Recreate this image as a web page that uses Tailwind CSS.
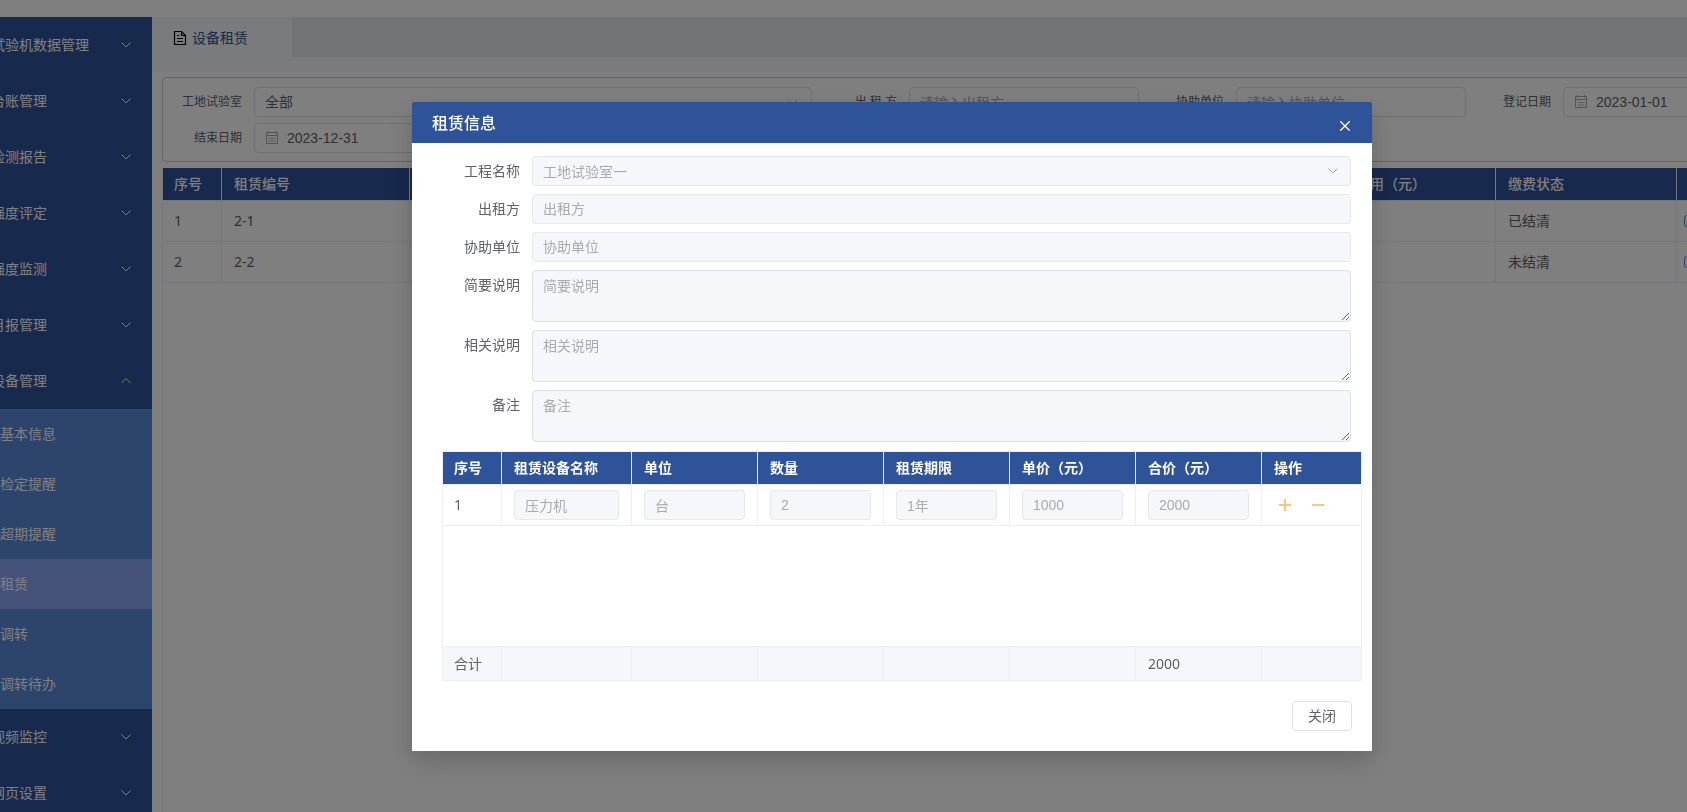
<!DOCTYPE html>
<html lang="zh-CN">
<head>
<meta charset="utf-8">
<title>设备租赁</title>
<script src="https://cdn.jsdelivr.net/npm/@tailwindcss/browser@4"></script>
</head>
<body class="h-screen overflow-hidden bg-white font-['Noto_Sans','Noto_Sans_CJK_SC',sans-serif] text-sm text-[#606266]">
<svg class="hidden">
  <symbol id="down" viewBox="0 0 14 14"><path d="M2.5 4.5 7 9l4.500-4.500" fill="none" stroke="currentColor"/></symbol>
  <symbol id="up" viewBox="0 0 14 14"><path d="M2.500 9 7 4.500 11.500 9" fill="none" stroke="currentColor"/></symbol>
  <symbol id="cal" viewBox="0 0 14 14"><path d="M1.500 1.500h11v11h-11zM1.500 4.500h11M3.500 0v2.500M10.500 0v2.500" fill="none" stroke="currentColor"/><path d="M3.500 7.500h2M6 7.500h2M8.500 7.500h2M3.500 10h2M6 10h2M8.500 10h2" fill="none" stroke="currentColor"/></symbol>
</svg>

<div class="flex h-full flex-col pt-[17px]">
  <div class="flex min-h-0 flex-1">
    <nav class="w-[152px] shrink-0 overflow-hidden bg-[#2e5398] text-white">
      <ul>
        <li><a href="#" class="-ml-[9px] flex h-14 items-center justify-between whitespace-nowrap pr-[19px]">试验机数据管理<svg class="size-3.5"><use href="#down"/></svg></a></li>
        <li><a href="#" class="-ml-[9px] flex h-14 items-center justify-between whitespace-nowrap pr-[19px]">台账管理<svg class="size-3.5"><use href="#down"/></svg></a></li>
        <li><a href="#" class="-ml-[9px] flex h-14 items-center justify-between whitespace-nowrap pr-[19px]">检测报告<svg class="size-3.5"><use href="#down"/></svg></a></li>
        <li><a href="#" class="-ml-[9px] flex h-14 items-center justify-between whitespace-nowrap pr-[19px]">强度评定<svg class="size-3.5"><use href="#down"/></svg></a></li>
        <li><a href="#" class="-ml-[9px] flex h-14 items-center justify-between whitespace-nowrap pr-[19px]">强度监测<svg class="size-3.5"><use href="#down"/></svg></a></li>
        <li><a href="#" class="-ml-[9px] flex h-14 items-center justify-between whitespace-nowrap pr-[19px]">月报管理<svg class="size-3.5"><use href="#down"/></svg></a></li>
        <li>
          <a href="#" class="-ml-[9px] flex h-14 items-center justify-between whitespace-nowrap pr-[19px]">设备管理<svg class="size-3.5"><use href="#up"/></svg></a>
          <ul class="bg-[#5a88d8]">
            <li><a href="#" class="flex h-[50px] items-center">基本信息</a></li>
            <li><a href="#" class="flex h-[50px] items-center">检定提醒</a></li>
            <li><a href="#" class="flex h-[50px] items-center">超期提醒</a></li>
            <li><a href="#" class="flex h-[50px] items-center bg-[#8ba6f6]">租赁</a></li>
            <li><a href="#" class="flex h-[50px] items-center">调转</a></li>
            <li><a href="#" class="flex h-[50px] items-center">调转待办</a></li>
          </ul>
        </li>
        <li><a href="#" class="-ml-[9px] flex h-14 items-center justify-between whitespace-nowrap pr-[19px]">视频监控<svg class="size-3.5"><use href="#down"/></svg></a></li>
        <li><a href="#" class="-ml-[9px] flex h-14 items-center justify-between whitespace-nowrap pr-[19px]">网页设置<svg class="size-3.5"><use href="#down"/></svg></a></li>
      </ul>
    </nav>

    <main class="flex min-w-0 flex-1 flex-col overflow-hidden">
      <div class="bg-[#f5f7fa] pb-[15px]">
        <div class="flex h-10 bg-[#e4e7eb]">
          <a href="#" class="flex w-[140px] items-center gap-[5px] bg-[#f5f7fa] pl-[21px] pt-0.5 text-[#2e5398]">
            <svg class="h-4 w-3.5 text-black" viewBox="0 0 14 16" fill="none" stroke="currentColor" stroke-width="1.200"><path d="M1.500 1.500h7l4 4v9h-11z"/><path d="M8.500 1.500v4h4M4 5.500h2M4 8.500h6M4 11.500h6"/></svg>
            设备租赁
          </a>
        </div>
      </div>

      <form class="-mr-1 ml-2.5 mt-[5px] flex flex-col gap-1.5 rounded border border-[#ccc] pb-2 pt-[9px] text-xs text-[#606266]">
        <div class="flex items-center whitespace-nowrap">
          <label for="lab" class="w-[79px] text-right">工地试验室</label>
          <div class="relative ml-3 min-w-0 flex-1">
            <select id="lab" class="block h-[30px] w-full appearance-none rounded border border-[#dcdfe6] px-2.5 text-sm"><option>全部</option></select>
            <svg class="pointer-events-none absolute right-3 top-2 size-3.5 text-[#c0c4cc]"><use href="#down"/></svg>
          </div>
          <label for="lessor" class="ml-[41px] w-[44px] text-right">出 租 方</label>
          <input id="lessor" placeholder="请输入出租方" class="ml-3 h-[30px] w-[230px] rounded border border-[#dcdfe6] px-2.5 text-sm placeholder:text-[#a8abb2]">
          <label for="assist" class="ml-[37px]">协助单位</label>
          <input id="assist" placeholder="请输入协助单位" class="ml-3 h-[30px] w-[230px] rounded border border-[#dcdfe6] px-2.5 text-sm placeholder:text-[#a8abb2]">
          <label for="start" class="ml-[37px]">登记日期</label>
          <div class="-mr-[71px] ml-3 flex h-[30px] w-[198px] items-center gap-2 rounded border border-[#dcdfe6] pl-2.5">
            <svg class="size-3.5 text-[#a8abb2]"><use href="#cal"/></svg>
            <input id="start" value="2023-01-01" class="w-24 font-['Liberation_Sans',sans-serif] text-sm">
          </div>
        </div>
        <div class="flex items-center">
          <label for="end" class="w-[79px] text-right">结束日期</label>
          <div class="ml-3 flex h-[30px] w-[198px] items-center gap-2 rounded border border-[#dcdfe6] pl-2.5">
            <svg class="size-3.5 text-[#a8abb2]"><use href="#cal"/></svg>
            <input id="end" value="2023-12-31" class="w-24 font-['Liberation_Sans',sans-serif] text-sm">
          </div>
        </div>
      </form>

      <div class="ml-2.5 mt-1.5 flex-1 border-l border-[#ebeef5]">
        <table class="w-[calc(100%+170px)] table-fixed border-separate border-spacing-0 text-left">
          <colgroup><col class="w-[59px]"><col class="w-[188px]"><col><col class="w-[180px]"><col class="w-[181px]"><col class="w-[180px]"></colgroup>
          <thead class="bg-[#2e5398] text-white">
            <tr class="h-[33px]">
              <th class="border-b border-r border-[#ebeef5] pl-[11px] font-medium">序号</th>
              <th class="border-b border-r border-[#ebeef5] pl-3 font-medium">租赁编号</th>
              <th class="border-b border-r border-[#ebeef5]"></th>
              <th class="border-b border-r border-[#ebeef5] pl-3 font-medium">租赁费用（元）</th>
              <th class="border-b border-r border-[#ebeef5] pl-3 font-medium">缴费状态</th>
              <th class="border-b border-r border-[#ebeef5]"></th>
            </tr>
          </thead>
          <tbody>
            <tr class="h-[41px]">
              <td class="border-b border-r border-[#ebeef5] pl-[11px]">1</td>
              <td class="border-b border-r border-[#ebeef5] pl-3">2-1</td>
              <td class="border-b border-r border-[#ebeef5]"></td>
              <td class="border-b border-r border-[#ebeef5]"></td>
              <td class="border-b border-r border-[#ebeef5] pl-3">已结清</td>
              <td class="border-b border-r border-[#ebeef5] pl-[7px]"><button type="button" aria-label="查看" class="block h-3 w-3.5 rounded-[3px] border border-[#4a80e8]"></button></td>
            </tr>
            <tr class="h-[41px]">
              <td class="border-b border-r border-[#ebeef5] pl-[11px]">2</td>
              <td class="border-b border-r border-[#ebeef5] pl-3">2-2</td>
              <td class="border-b border-r border-[#ebeef5]"></td>
              <td class="border-b border-r border-[#ebeef5]"></td>
              <td class="border-b border-r border-[#ebeef5] pl-3">未结清</td>
              <td class="border-b border-r border-[#ebeef5] pl-[7px]"><button type="button" aria-label="查看" class="block h-3 w-3.5 rounded-[3px] border border-[#4a80e8]"></button></td>
            </tr>
          </tbody>
        </table>
      </div>
    </main>
  </div>
</div>

<div class="fixed inset-0 flex items-start justify-center bg-black/50 pl-[97px] pt-[102px]">
  <section role="dialog" aria-labelledby="title" class="w-[960px] overflow-hidden rounded-[1px] bg-white pb-5 shadow-[0_12px_32px_4px_rgba(0,0,0,0.08),0_8px_20px_rgba(0,0,0,0.12)]">
    <header class="flex h-[41px] items-center justify-between bg-[#2e5398] pl-5 pr-[22px] text-white">
      <h2 id="title" class="text-base font-medium">租赁信息</h2>
      <button type="button" aria-label="关闭对话框" class="mt-1.5"><svg class="size-[10px]" viewBox="0 0 10 10"><path d="M0 0 10 10M10 0 0 10" stroke="currentColor" stroke-width="1.300"/></svg></button>
    </header>

    <form class="flex flex-col gap-2 pl-[30px] pr-[21px] pt-[13px] leading-[30px]">
      <div class="flex">
        <label for="project" class="w-[78px] text-right">工程名称</label>
        <div class="relative ml-3 flex-1">
          <select id="project" disabled class="block h-[30px] w-full appearance-none rounded border border-[#e4e7ed] bg-[#f5f7fa] px-2.5 text-[#a8abb2] opacity-100"><option>工地试验室一</option></select>
          <svg class="pointer-events-none absolute right-[11px] top-2 size-3.5 text-[#a8abb2]"><use href="#down"/></svg>
        </div>
      </div>
      <div class="flex">
        <label for="f2" class="w-[78px] text-right">出租方</label>
        <input id="f2" disabled placeholder="出租方" class="ml-3 h-[30px] flex-1 rounded border border-[#e4e7ed] bg-[#f5f7fa] px-2.5 placeholder:text-[#a8abb2]">
      </div>
      <div class="flex">
        <label for="f3" class="w-[78px] text-right">协助单位</label>
        <input id="f3" disabled placeholder="协助单位" class="ml-3 h-[30px] flex-1 rounded border border-[#e4e7ed] bg-[#f5f7fa] px-2.5 placeholder:text-[#a8abb2]">
      </div>
      <div class="flex">
        <label for="f4" class="w-[78px] text-right">简要说明</label>
        <textarea id="f4" disabled placeholder="简要说明" class="ml-3 block h-[52px] flex-1 resize-y rounded border border-[#dcdfe6] bg-[#f5f7fa] px-2.5 py-1 leading-[21px] placeholder:text-[#a8abb2]"></textarea>
      </div>
      <div class="flex">
        <label for="f5" class="w-[78px] text-right">相关说明</label>
        <textarea id="f5" disabled placeholder="相关说明" class="ml-3 block h-[52px] flex-1 resize-y rounded border border-[#dcdfe6] bg-[#f5f7fa] px-2.5 py-1 leading-[21px] placeholder:text-[#a8abb2]"></textarea>
      </div>
      <div class="flex">
        <label for="f6" class="w-[78px] text-right">备注</label>
        <textarea id="f6" disabled placeholder="备注" class="ml-3 block h-[52px] flex-1 resize-y rounded border border-[#dcdfe6] bg-[#f5f7fa] px-2.5 py-1 leading-[21px] placeholder:text-[#a8abb2]"></textarea>
      </div>
    </form>

    <div class="ml-[30px] mr-2.5 mt-[9px] border-l border-t border-[#ebeef5]">
      <table class="w-full table-fixed border-separate border-spacing-0 text-left">
        <colgroup><col class="w-[59px]"><col class="w-[130px]"><col class="w-[126px]"><col class="w-[126px]"><col class="w-[126px]"><col class="w-[126px]"><col class="w-[126px]"><col></colgroup>
        <thead class="bg-[#2e5398] text-white">
          <tr class="h-[33px]">
            <th class="border-b border-r border-[#ebeef5] pl-[11px] font-bold">序号</th>
            <th class="border-b border-r border-[#ebeef5] pl-3 font-bold">租赁设备名称</th>
            <th class="border-b border-r border-[#ebeef5] pl-3 font-bold">单位</th>
            <th class="border-b border-r border-[#ebeef5] pl-3 font-bold">数量</th>
            <th class="border-b border-r border-[#ebeef5] pl-3 font-bold">租赁期限</th>
            <th class="border-b border-r border-[#ebeef5] pl-3 font-bold">单价（元）</th>
            <th class="border-b border-r border-[#ebeef5] pl-3 font-bold">合价（元）</th>
            <th class="border-b border-r border-[#ebeef5] pl-3 font-bold">操作</th>
          </tr>
        </thead>
        <tbody>
          <tr class="h-[41px]">
            <td class="border-b border-r border-[#ebeef5] pl-[11px]">1</td>
            <td class="border-b border-r border-[#ebeef5] px-3"><input aria-label="租赁设备名称" disabled value="压力机" class="block h-[30px] w-full rounded border border-[#e4e7ed] bg-[#f5f7fa] px-2.5 font-['Liberation_Sans','Noto_Sans_CJK_SC',sans-serif] text-[#a8abb2]"></td>
            <td class="border-b border-r border-[#ebeef5] px-3"><input aria-label="单位" disabled value="台" class="block h-[30px] w-full rounded border border-[#e4e7ed] bg-[#f5f7fa] px-2.5 font-['Liberation_Sans','Noto_Sans_CJK_SC',sans-serif] text-[#a8abb2]"></td>
            <td class="border-b border-r border-[#ebeef5] px-3"><input aria-label="数量" disabled value="2" class="block h-[30px] w-full rounded border border-[#e4e7ed] bg-[#f5f7fa] px-2.5 font-['Liberation_Sans','Noto_Sans_CJK_SC',sans-serif] text-[#a8abb2]"></td>
            <td class="border-b border-r border-[#ebeef5] px-3"><input aria-label="租赁期限" disabled value="1年" class="block h-[30px] w-full rounded border border-[#e4e7ed] bg-[#f5f7fa] px-2.5 font-['Liberation_Sans','Noto_Sans_CJK_SC',sans-serif] text-[#a8abb2]"></td>
            <td class="border-b border-r border-[#ebeef5] px-3"><input aria-label="单价（元）" disabled value="1000" class="block h-[30px] w-full rounded border border-[#e4e7ed] bg-[#f5f7fa] px-2.5 font-['Liberation_Sans','Noto_Sans_CJK_SC',sans-serif] text-[#a8abb2]"></td>
            <td class="border-b border-r border-[#ebeef5] px-3"><input aria-label="合价（元）" disabled value="2000" class="block h-[30px] w-full rounded border border-[#e4e7ed] bg-[#f5f7fa] px-2.5 font-['Liberation_Sans','Noto_Sans_CJK_SC',sans-serif] text-[#a8abb2]"></td>
            <td class="border-b border-r border-[#ebeef5] pl-[17px]">
              <div class="flex gap-[21px] text-[#fdc57b]">
                <button type="button" aria-label="添加"><svg class="size-3" viewBox="0 0 12 12"><path d="M0 6h12M6 0v12" stroke="currentColor" stroke-width="2"/></svg></button>
                <button type="button" aria-label="删除"><svg class="size-3" viewBox="0 0 12 12"><path d="M0 6h12" stroke="currentColor" stroke-width="2"/></svg></button>
              </div>
            </td>
          </tr>
          <tr class="h-[120px]"><td colspan="8" class="border-r border-[#ebeef5]"></td></tr>
        </tbody>
        <tfoot class="bg-[#f5f7fa]">
          <tr class="h-[35px]">
            <td class="border-y border-r border-[#ebeef5] pl-[11px]">合计</td>
            <td class="border-y border-r border-[#ebeef5]"></td>
            <td class="border-y border-r border-[#ebeef5]"></td>
            <td class="border-y border-r border-[#ebeef5]"></td>
            <td class="border-y border-r border-[#ebeef5]"></td>
            <td class="border-y border-r border-[#ebeef5]"></td>
            <td class="border-y border-r border-[#ebeef5] pl-3">2000</td>
            <td class="border-y border-r border-[#ebeef5]"></td>
          </tr>
        </tfoot>
      </table>
    </div>

    <footer class="flex justify-end pr-5 pt-5">
      <button type="button" class="h-[30px] w-[60px] rounded border border-[#dcdfe6] bg-white">关闭</button>
    </footer>
  </section>
</div>
</body>
</html>
